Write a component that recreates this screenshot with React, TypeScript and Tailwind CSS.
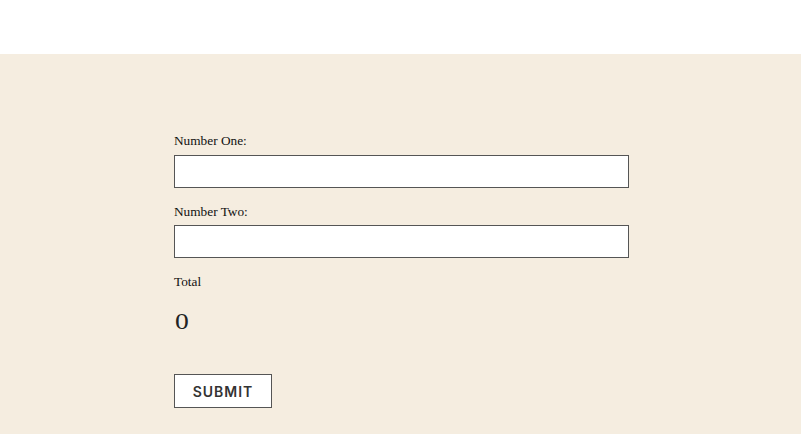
import React from "react";

export default function App() {
  return (
    <div className="min-h-screen bg-white" style={{ fontFamily: '"Liberation Serif", serif' }}>
      <div className="h-[54px] bg-white" />
      <div className="bg-[#f5ede0] min-h-[380px] pt-[79px] pb-10">
        <div className="ml-[174px] w-[455px] flex flex-col">
          <label className="text-[13.3px] leading-[16px] text-[#111]">Number One:</label>
          <input className="mt-[6px] h-[33px] w-full bg-white border border-[#555] outline-none" />
          <label className="mt-[16px] text-[13.3px] leading-[16px] text-[#111]">Number Two:</label>
          <input className="mt-[5px] h-[33px] w-full bg-white border border-[#555] outline-none" />
          <div className="mt-[16px] text-[13.3px] leading-[16px] text-[#111]">Total</div>
          <div
            className="mt-[18px] ml-[1px] text-[23px] leading-[28px] text-[#222]"
            style={{ transform: "scaleX(1.2)", transformOrigin: "left" }}
          >
            0
          </div>
          <div className="mt-[38px]">
            <button
              className="h-[34px] w-[98px] bg-white border border-[#555] text-[14px] font-semibold tracking-[1px] text-[#333]"
              style={{ fontFamily: 'Inter, "Liberation Sans", sans-serif' }}
            >
              SUBMIT
            </button>
          </div>
        </div>
      </div>
    </div>
  );
}
